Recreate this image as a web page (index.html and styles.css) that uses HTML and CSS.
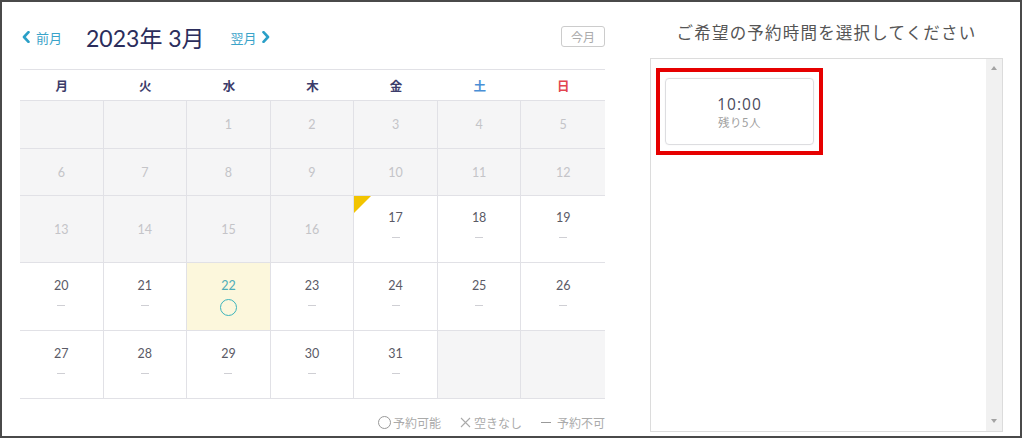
FILE: index.html
```html
<!DOCTYPE html>
<html lang="ja">
<head>
<meta charset="utf-8">
<link rel="stylesheet" href="styles.css">
</head>
<body>
<div class="frame">
  <section class="cal">
    <div class="nav">
      <a class="nav-link prev"><svg class="chev" width="8" height="12" viewBox="0 0 8 12"><polyline points="6.5,1.2 2,6 6.5,10.8" fill="none" stroke="#2a9fc7" stroke-width="2.6" stroke-linecap="round" stroke-linejoin="round"/></svg>前月</a>
      <h1 class="month">2023年 3月</h1>
      <a class="nav-link next">翌月<svg class="chev" width="8" height="12" viewBox="0 0 8 12"><polyline points="1.5,1.2 6,6 1.5,10.8" fill="none" stroke="#2a9fc7" stroke-width="2.6" stroke-linecap="round" stroke-linejoin="round"/></svg></a>
      <span class="today-btn">今月</span>
    </div>
    <div class="grid">
      <div class="dow">月</div><div class="dow">火</div><div class="dow">水</div><div class="dow">木</div><div class="dow">金</div><div class="dow sat">土</div><div class="dow sun">日</div>

      <div class="cell off"></div><div class="cell off"></div><div class="cell off">1</div><div class="cell off">2</div><div class="cell off">3</div><div class="cell off">4</div><div class="cell off last">5</div>

      <div class="cell off">6</div><div class="cell off">7</div><div class="cell off">8</div><div class="cell off">9</div><div class="cell off">10</div><div class="cell off">11</div><div class="cell off last">12</div>

      <div class="cell off">13</div><div class="cell off">14</div><div class="cell off">15</div><div class="cell off">16</div>
      <div class="cell on flag"><span class="num">17</span><span class="dash"></span></div>
      <div class="cell on"><span class="num">18</span><span class="dash"></span></div>
      <div class="cell on last"><span class="num">19</span><span class="dash"></span></div>

      <div class="cell on"><span class="num">20</span><span class="dash"></span></div>
      <div class="cell on"><span class="num">21</span><span class="dash"></span></div>
      <div class="cell on today"><span class="num">22</span><span class="ring"></span></div>
      <div class="cell on"><span class="num">23</span><span class="dash"></span></div>
      <div class="cell on"><span class="num">24</span><span class="dash"></span></div>
      <div class="cell on"><span class="num">25</span><span class="dash"></span></div>
      <div class="cell on last"><span class="num">26</span><span class="dash"></span></div>

      <div class="cell on"><span class="num">27</span><span class="dash"></span></div>
      <div class="cell on"><span class="num">28</span><span class="dash"></span></div>
      <div class="cell on"><span class="num">29</span><span class="dash"></span></div>
      <div class="cell on"><span class="num">30</span><span class="dash"></span></div>
      <div class="cell on"><span class="num">31</span><span class="dash"></span></div>
      <div class="cell off"></div>
      <div class="cell off last"></div>
    </div>
    <div class="legend">
      <span class="lg"><span class="lg-ring"></span>予約可能</span>
      <span class="lg"><svg class="lg-x" width="11" height="11" viewBox="0 0 11 11"><path d="M1 1 L10 10 M10 1 L1 10" stroke="#aaa" stroke-width="1.1" fill="none"/></svg>空きなし</span>
      <span class="lg"><span class="lg-dash"></span>予約不可</span>
    </div>
  </section>

  <section class="times">
    <h2 class="times-title">ご希望の予約時間を選択してください</h2>
    <div class="times-box">
      <div class="times-list">
        <div class="highlight">
          <div class="slot">
            <div class="slot-time">10:00</div>
            <div class="slot-left">残り5人</div>
          </div>
        </div>
      </div>
      <div class="scrollbar">
        <span class="sb-up"></span>
        <span class="sb-down"></span>
      </div>
    </div>
  </section>
</div>
</body>
</html>
```
FILE: styles.css
```css
* { box-sizing: border-box; margin: 0; padding: 0; }
html, body { background: #fff; }
body {
  font-family: Lato, "Noto Sans CJK JP", sans-serif;
  color: #555;
}
.frame {
  width: 1022px;
  height: 438px;
  border: 2px solid #4a4a4a;
  display: flex;
  padding: 20px 17px 0 18px;
  gap: 45px;
}
.cal { width: 585px; flex: none; }
.nav {
  height: 30px;
  display: flex;
  align-items: center;
  margin-bottom: 17px;
}
.nav-link {
  font-family: "Noto Sans CJK JP", sans-serif;
  font-size: 13px;
  color: #3aa3c9;
  display: flex;
  align-items: center;
}
.prev { margin-left: 2px; }
.prev .chev { margin-right: 6px; }
.next .chev { margin-left: 5px; }
.month {
  font-family: Lato, "Noto Sans CJK JP", sans-serif;
  font-weight: 400;
  font-size: 23px;
  color: #2b2d5c;
  margin: 0 26px 0 24px;
}
.today-btn {
  margin-left: auto;
  margin-top: -2px;
  font-family: "Noto Sans CJK JP", sans-serif;
  font-size: 12px;
  color: #aaa;
  border: 1px solid #ccc;
  border-radius: 3px;
  width: 44px;
  height: 21px;
  display: flex;
  align-items: center;
  justify-content: center;
}
.grid {
  display: grid;
  grid-template-columns: repeat(7, 1fr);
  grid-template-rows: 31px 48px 47px 67px 68px 68px;
  border-top: 1px solid #e1e1e6;
}
.dow {
  font-family: "Noto Sans CJK JP", sans-serif;
  font-weight: bold;
  font-size: 12.5px;
  color: #3c3c6a;
  display: flex;
  align-items: center;
  justify-content: center;
  border-bottom: 1px solid #e1e1e6;
}
.dow.sat { color: #4a8fd6; }
.dow.sun { color: #e2454f; }
.cell {
  border-bottom: 1px solid #e1e1e6;
  border-right: 1px solid #e1e1e6;
  display: flex;
  flex-direction: column;
  align-items: center;
  justify-content: center;
  font-size: 12.5px;
  position: relative;
}
.cell.last { border-right: none; }
.cell.off {
  background: #f5f5f6;
  color: #c4c4c8;
}
.cell.on { color: #5a5a66; }
.num { line-height: 14px; }
.dash {
  width: 8px;
  height: 1px;
  background: #cfcfd4;
  margin-top: 12px;
  margin-bottom: 9px;
}
.today { background: #fcf7dc; }
.today .num { color: #4fadb8; }
.ring {
  width: 17px;
  height: 17px;
  border: 1.5px solid #3cb4bc;
  border-radius: 50%;
  margin-top: 6px;
  margin-bottom: -2px;
}
.flag::before {
  content: "";
  position: absolute;
  left: 0;
  top: 0;
  width: 0;
  height: 0;
  border-top: 17px solid #f2c400;
  border-right: 17px solid transparent;
}
.legend {
  display: flex;
  justify-content: flex-end;
  gap: 19px;
  margin-top: 15px;
  font-family: "Noto Sans CJK JP", sans-serif;
  font-size: 12px;
  color: #aaa;
}
.lg { display: flex; align-items: center; }
.lg-ring {
  width: 13px;
  height: 13px;
  border: 1px solid #999;
  border-radius: 50%;
  margin-right: 2px;
}
.lg-x { margin-right: 3px; }
.lg-dash {
  width: 10px;
  height: 1px;
  background: #999;
  margin-right: 6px;
}
.times { width: 353px; flex: none; display: flex; flex-direction: column; }
.times-title {
  font-family: "Noto Sans CJK JP", sans-serif;
  font-weight: 400;
  font-size: 16.5px;
  letter-spacing: 1.2px;
  color: #555;
  text-align: center;
  height: 20px;
  line-height: 20px;
  margin-bottom: 16px;
}
.times-box {
  height: 374px;
  border: 1px solid #dcdcdc;
  display: flex;
}
.times-list {
  flex: 1;
  padding: 9px 5px;
}
.highlight {
  width: 167px;
  height: 87px;
  border: 4px solid #e60000;
  padding: 6px 5px;
}
.slot {
  width: 149px;
  height: 67px;
  border: 1px solid #dddde0;
  border-radius: 4px;
  box-shadow: 0 0 2px rgba(0,0,0,0.06);
  display: flex;
  flex-direction: column;
  align-items: center;
  justify-content: center;
}
.slot-time {
  font-family: "Open Sans", sans-serif;
  font-size: 15.5px;
  letter-spacing: 1px;
  color: #4a4a5c;
  line-height: 19px;
  margin-top: 2px;
}
.slot-left {
  font-family: "Noto Sans CJK JP", sans-serif;
  font-size: 11.5px;
  letter-spacing: 0.5px;
  color: #a0a0a0;
  line-height: 16px;
}
.scrollbar {
  width: 16px;
  background: #f1f1f1;
  display: flex;
  flex-direction: column;
  justify-content: space-between;
  align-items: center;
  padding: 7px 0 8px;
}
.sb-up, .sb-down {
  width: 0; height: 0;
  border-left: 3.5px solid transparent;
  border-right: 3.5px solid transparent;
}
.sb-up { border-bottom: 4px solid #a3a3a3; }
.sb-down { border-top: 4px solid #a3a3a3; }
```
